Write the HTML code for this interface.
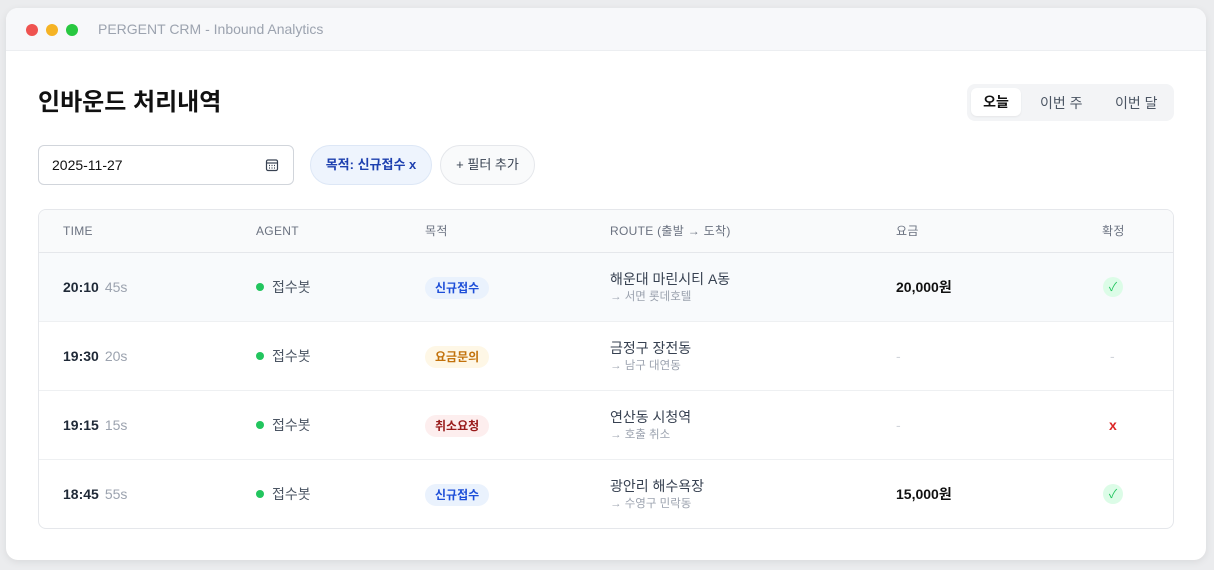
<!DOCTYPE html>
<html><head><meta charset="utf-8"><style>
*{box-sizing:border-box;margin:0;padding:0}
body{width:1214px;height:570px;background:#ebecee;font-family:"Liberation Sans","Noto Sans CJK KR",sans-serif;position:relative;overflow:hidden;color:#111827}
.win{position:absolute;left:6px;top:8px;width:1200px;height:552px;background:#fff;border-radius:12px;overflow:hidden;box-shadow:0 2px 8px rgba(0,0,0,.08)}
.bar{height:43px;background:#f7f8fa;border-bottom:1px solid #eceef1;position:relative}
.dot{position:absolute;top:16px;width:12px;height:12px;border-radius:50%}
.bar .t{position:absolute;left:92px;top:13px;font-size:14px;color:#9ca3af}
.abs{position:absolute}
h1{position:absolute;left:32px;top:78px;font-size:24px;font-weight:700;color:#111;line-height:34px}
.seg{position:absolute;left:961px;top:76px;width:207px;height:37px;background:#f3f4f6;border-radius:8px}
.seg span{position:absolute;top:9px;font-size:14px;color:#4b5563}
.seg .on{left:4px;top:4px;width:50px;height:28px;background:#fff;border-radius:6px;color:#111;text-align:center;line-height:28px;font-weight:700;box-shadow:0 1px 2px rgba(0,0,0,.06)}
.date{position:absolute;left:32px;top:137px;width:256px;height:40px;border:1px solid #d1d5db;border-radius:6px;font-size:14px;padding:11px 13px;color:#111}
.chip{position:absolute;top:137px;height:40px;border-radius:20px;font-size:13px;line-height:38px;text-align:center}
.tbl{position:absolute;left:32px;top:201px;width:1136px;height:320px;border:1px solid #e5e7eb;border-radius:8px;overflow:hidden}
.hd{height:43px;background:#f9fafb;border-bottom:1px solid #e5e7eb;position:relative;font-size:12px;color:#6b7280}
.hd span,.r span{position:absolute;line-height:20px}
.hd span{top:11px;letter-spacing:.3px}
.r{height:69px;position:relative;border-bottom:1px solid #eef0f2;font-size:14px}
.r:last-child{border-bottom:none}
.tm{left:24px;top:24px;font-weight:700;color:#1f2937}
.tm i{font-style:normal;font-weight:400;color:#9ca3af;margin-left:6px}
.ag{left:217px;top:24px;color:#4b5563}
.ag:before{content:"";display:inline-block;width:8px;height:8px;border-radius:50%;background:#22c55e;margin-right:8px;vertical-align:1px}
.bd{left:386px;top:24px;height:22px;line-height:22px!important;padding:0 10px;border-radius:11px;font-size:12px;font-weight:700}
.rt{left:571px;top:16px;color:#374151}
.rt small{display:block;font-size:11.5px;color:#9ca3af;line-height:17px}
.fee{left:857px;top:24px;font-weight:700;color:#111}
.dash{color:#d1d5db;font-weight:400}
.ck{left:1064px;top:24px;width:20px;height:20px;border-radius:50%;background:#dcfce7;color:#22c55e;font-size:12px;text-align:center;line-height:20px!important}
</style></head><body>
<div class="win">
 <div class="bar">
  <div class="dot" style="left:20px;background:#ef5350"></div>
  <div class="dot" style="left:40px;background:#f5b324"></div>
  <div class="dot" style="left:60px;background:#28c840"></div>
  <div class="t">PERGENT CRM - Inbound Analytics</div>
 </div>
 <h1>인바운드 처리내역</h1>
 <div class="seg"><span class="on">오늘</span><span style="left:73px">이번 주</span><span style="left:148px">이번 달</span></div>
 <div class="date">2025-11-27
  <svg class="abs" style="left:226px;top:12px" width="14" height="14" viewBox="0 0 14 14" fill="none" stroke="#374151" stroke-width="1.2"><rect x="1.5" y="2" width="11" height="10.5" rx="1.5"/><line x1="1.5" y1="5" x2="12.5" y2="5"/><path d="M4 7.5h1M6.5 7.5h1M9 7.5h1M4 10h1M6.5 10h1M9 10h1"/></svg>
 </div>
 <div class="chip" style="left:304px;width:122px;background:#eef4fd;border:1px solid #dde7f6;color:#1e40af;font-weight:700">목적: 신규접수 x</div>
 <div class="chip" style="left:434px;width:95px;background:#f9fafb;border:1px solid #e5e7eb;color:#374151">+ 필터 추가</div>
 <div class="tbl">
  <div class="hd"><span style="left:24px">TIME</span><span style="left:217px">AGENT</span><span style="left:386px">목적</span><span style="left:571px">ROUTE (출발 → 도착)</span><span style="left:857px">요금</span><span style="left:1063px">확정</span></div>
  <div class="r" style="background:#f8fafc"><span class="tm">20:10<i>45s</i></span><span class="ag">접수봇</span><span class="bd" style="background:#eaf2fd;color:#1d4ed8">신규접수</span><span class="rt">해운대 마린시티 A동<small>→ 서면 롯데호텔</small></span><span class="fee">20,000원</span><span class="ck">✓</span></div>
  <div class="r"><span class="tm">19:30<i>20s</i></span><span class="ag">접수봇</span><span class="bd" style="background:#fef7e6;color:#c2720c">요금문의</span><span class="rt">금정구 장전동<small>→ 남구 대연동</small></span><span class="fee dash">-</span><span class="abs dash" style="left:1071px;top:24px">-</span></div>
  <div class="r"><span class="tm">19:15<i>15s</i></span><span class="ag">접수봇</span><span class="bd" style="background:#fdeeee;color:#991b1b">취소요청</span><span class="rt">연산동 시청역<small>→ 호출 취소</small></span><span class="fee dash">-</span><span class="abs" style="left:1070px;top:24px;color:#dc2626;font-weight:700">x</span></div>
  <div class="r"><span class="tm">18:45<i>55s</i></span><span class="ag">접수봇</span><span class="bd" style="background:#eaf2fd;color:#1d4ed8">신규접수</span><span class="rt">광안리 해수욕장<small>→ 수영구 민락동</small></span><span class="fee">15,000원</span><span class="ck">✓</span></div>
 </div>
</div>
</body></html>
